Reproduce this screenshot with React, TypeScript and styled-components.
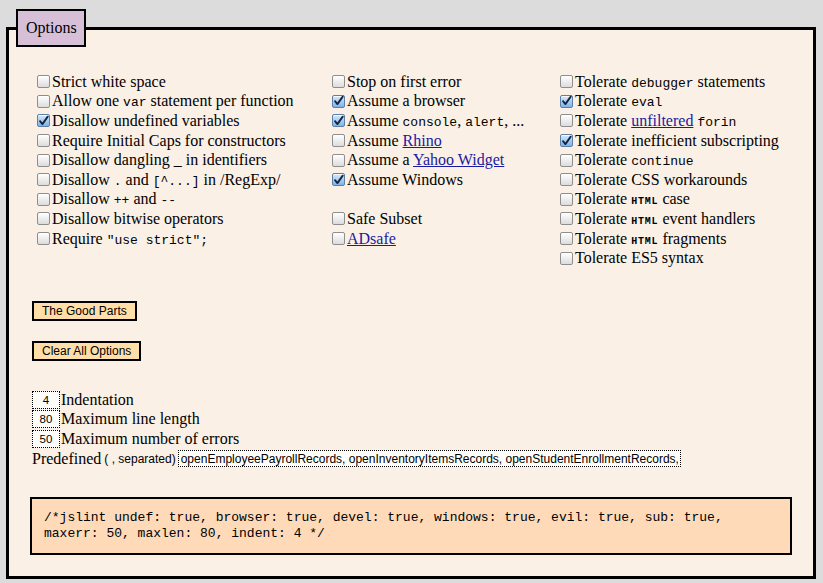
import React from 'react';
import styled, { createGlobalStyle } from 'styled-components';

const GlobalStyle = createGlobalStyle`
  html, body {
    margin: 0;
    padding: 0;
    background: #dcdcdc;
  }
  body {
    font-family: 'Liberation Serif', 'Times New Roman', serif;
    font-size: 16px;
    color: #000;
  }
`;

// Styled Components
const Page = styled.div`
  padding: 9px 7px 3px 6px;
`;

const Fieldset = styled.fieldset`
  margin: 0;
  padding: 0;
  min-width: 0;
  border: 3px solid #000;
  background: #faf0e6;
`;

const Legend = styled.legend`
  margin-left: 7px;
  padding: 8px 7px 8px 8px;
  border: 2px solid #000;
  background: #d8bfd8;
  font-size: 16px;
  line-height: 18px;
`;

const Content = styled.div`
  padding: 25px 21px 21px 23px;
`;

const Columns = styled.div`
  display: grid;
  grid-template-columns: 295px 228px 1fr;
`;

const Col = styled.div`
  display: flex;
  flex-direction: column;
`;

const Row = styled.div`
  display: flex;
  align-items: center;
  height: 19.6px;
  white-space: nowrap;
`;

const Box = styled.span<{ $checked?: boolean }>`
  box-sizing: border-box;
  display: inline-flex;
  align-items: center;
  justify-content: center;
  width: 13px;
  height: 13px;
  margin: 0 2px 0 5px;
  border: 1px solid ${(p) => (p.$checked ? '#5b7fa6' : '#8e8e8e')};
  border-radius: 2px;
  background: ${(p) =>
    p.$checked
      ? 'linear-gradient(#d5e9fb, #7db4ea)'
      : 'linear-gradient(#ffffff, #dcdcdc)'};
  box-shadow: inset 0 1px 0 rgba(255, 255, 255, 0.8);
  flex: none;
`;

const Code = styled.code`
  font-family: 'Liberation Mono', 'Courier New', monospace;
  font-size: 13px;
`;

const Caps = styled.code`
  font-family: 'Liberation Mono', 'Courier New', monospace;
  font-size: 10px;
  font-weight: bold;
  letter-spacing: 0.8px;
`;

const Link = styled.a`
  color: #1a1aa0;
  text-decoration: underline;
`;

const Button = styled.button<{ $top?: number }>`
  display: block;
  margin: ${(p) => p.$top ?? 33}px 0 0 0;
  padding: 0 8px;
  height: 20px;
  border: 2px solid #000;
  border-radius: 0;
  background: #ffdea8;
  font-family: 'Liberation Sans', Arial, sans-serif;
  font-size: 12px;
  line-height: 16px;
  color: #000;
`;

const Numbers = styled.div`
  margin-top: 29px;
  display: flex;
  flex-direction: column;
`;

const NumBox = styled.input`
  box-sizing: border-box;
  width: 28px;
  height: 18px;
  margin: 0 1px 0 0;
  padding: 0;
  border: 1px dotted #000;
  background: #fffdf9;
  font-family: 'Liberation Sans', Arial, sans-serif;
  font-size: 11.5px;
  text-align: center;
  color: #000;
  outline: none;
`;

const Small = styled.span`
  margin-left: 3px;
  font-family: 'Liberation Sans', Arial, sans-serif;
  font-size: 12px;
`;

const PredefInput = styled.input`
  box-sizing: border-box;
  width: 503px;
  height: 17px;
  margin-left: 2px;
  padding: 0 2px;
  border: 1px dotted #000;
  background: #fffdf9;
  font-family: 'Liberation Sans', Arial, sans-serif;
  font-size: 12px;
  color: #000;
  outline: none;
`;

const Output = styled.div`
  margin: 29px 0 0 -2px;
  padding: 11px 12px;
  border: 2px solid #000;
  background: #ffdab9;
  font-family: 'Liberation Mono', 'Courier New', monospace;
  font-size: 13px;
  line-height: 16px;
  white-space: pre-wrap;
`;

type Opt = { label: React.ReactNode; checked?: boolean } | null;

const col1: Opt[] = [
  { label: 'Strict white space' },
  { label: <>Allow one <Code>var</Code> statement per function</> },
  { label: 'Disallow undefined variables', checked: true },
  { label: 'Require Initial Caps for constructors' },
  { label: 'Disallow dangling _ in identifiers' },
  { label: <>Disallow <Code>.</Code> and <Code>[^...]</Code> in /RegExp/</> },
  { label: <>Disallow <Code>++</Code> and <Code>--</Code></> },
  { label: 'Disallow bitwise operators' },
  { label: <>Require <Code>"use strict";</Code></> },
];

const col2: Opt[] = [
  { label: 'Stop on first error' },
  { label: 'Assume a browser', checked: true },
  { label: <>Assume <Code>console</Code>, <Code>alert</Code>, ...</>, checked: true },
  { label: <>Assume <Link href="#">Rhino</Link></> },
  { label: <>Assume a <Link href="#">Yahoo Widget</Link></> },
  { label: 'Assume Windows', checked: true },
  null,
  { label: 'Safe Subset' },
  { label: <Link href="#">ADsafe</Link> },
];

const col3: Opt[] = [
  { label: <>Tolerate <Code>debugger</Code> statements</> },
  { label: <>Tolerate <Code>eval</Code></>, checked: true },
  { label: <>Tolerate <Link href="#">unfiltered</Link> <Code>forin</Code></> },
  { label: 'Tolerate inefficient subscripting', checked: true },
  { label: <>Tolerate <Code>continue</Code></> },
  { label: 'Tolerate CSS workarounds' },
  { label: <>Tolerate <Caps>HTML</Caps> case</> },
  { label: <>Tolerate <Caps>HTML</Caps> event handlers</> },
  { label: <>Tolerate <Caps>HTML</Caps> fragments</> },
  { label: 'Tolerate ES5 syntax' },
];

const numbers = [
  { value: '4', label: 'Indentation' },
  { value: '80', label: 'Maximum line length' },
  { value: '50', label: 'Maximum number of errors' },
];

const Check: React.FC<{ checked?: boolean }> = ({ checked }) => (
  <Box $checked={checked}>
    {checked && (
      <svg width="12" height="12" viewBox="0 0 12 12">
        <path d="M2.2 6.2 L4.8 9.4 L10.6 1.2" fill="none" stroke="#16243c" strokeWidth="2" strokeLinecap="round" strokeLinejoin="round" />
      </svg>
    )}
  </Box>
);

const Column: React.FC<{ items: Opt[] }> = ({ items }) => (
  <Col>
    {items.map((item, i) =>
      item ? (
        <Row key={i}>
          <Check checked={item.checked} />
          <span>{item.label}</span>
        </Row>
      ) : (
        <Row key={i} />
      )
    )}
  </Col>
);

export default function App() {
  return (
    <Page>
      <GlobalStyle />
      <Fieldset>
        <Legend>Options</Legend>
        <Content>
          <Columns>
            <Column items={col1} />
            <Column items={col2} />
            <Column items={col3} />
          </Columns>

          <Button>The Good Parts</Button>
          <Button $top={20}>Clear All Options</Button>

          <Numbers>
            {numbers.map((n) => (
              <Row key={n.label}>
                <NumBox defaultValue={n.value} />
                <span>{n.label}</span>
              </Row>
            ))}
            <Row>
              <span>Predefined</span>
              <Small>( , separated)</Small>
              <PredefInput
                defaultValue="openEmployeePayrollRecords, openInventoryItemsRecords, openStudentEnrollmentRecords, openCourseRecords"
              />
            </Row>
          </Numbers>

          <Output>
            {'/*jslint undef: true, browser: true, devel: true, windows: true, evil: true, sub: true,\nmaxerr: 50, maxlen: 80, indent: 4 */'}
          </Output>
        </Content>
      </Fieldset>
    </Page>
  );
}
